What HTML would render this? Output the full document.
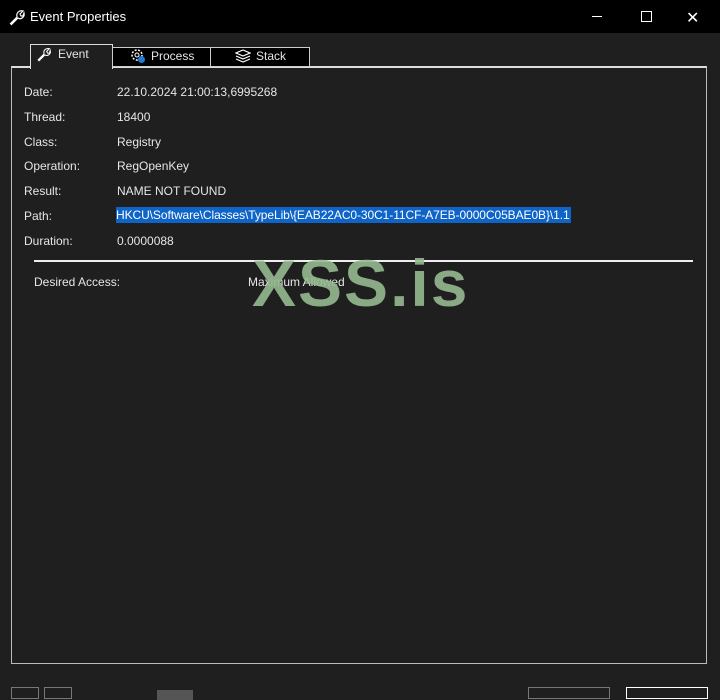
<!DOCTYPE html><html><head><style>
body{margin:0;width:720px;height:693px;background:#1f1f1f;font-family:"Liberation Sans",sans-serif;color:#e6e6e6;overflow:hidden;position:relative}
.a{position:absolute}
.t{font-size:12px}
</style></head><body>
<div class="a" style="left:0;top:0;width:720px;height:33px;background:#000"></div>
<svg class="a" style="left:8px;top:8px" width="18" height="18" viewBox="0 0 18 18"><path d="M2 16 L9 9 M9 9 C8 5 11 2 15 3 L12 6 L13 8 L15 8 L16 5 C17 9 13 12 10 10 L3 17 Z" fill="none" stroke="#fff" stroke-width="1.2"/></svg>
<div class="a t" style="left:30px;top:9px;font-size:13px;color:#fff">Event Properties</div>
<div class="a" style="left:592px;top:16px;width:10px;height:1px;background:#fff"></div>
<div class="a" style="left:641px;top:11px;width:9px;height:9px;border:1px solid #fff"></div>
<div class="a" style="left:686px;top:8px;color:#fff;font-size:16px">✕</div>
<div class="a" style="left:11px;top:66px;width:694px;height:595px;border:1px solid #bbb;border-top:2px solid #ddd"></div>
<div class="a" style="left:30px;top:44px;width:81px;height:24px;border:1px solid #ddd;border-bottom:none;background:#1f1f1f"></div>
<div class="a" style="left:112px;top:47px;width:97px;height:18px;border:1px solid #ccc;background:#000"></div>
<div class="a" style="left:210px;top:47px;width:98px;height:18px;border:1px solid #ccc;background:#000"></div>
<svg class="a" style="left:36px;top:46px" width="16" height="16" viewBox="0 0 18 18"><path d="M2 16 L9 9 M9 9 C8 5 11 2 15 3 L12 6 L13 8 L15 8 L16 5 C17 9 13 12 10 10 L3 17 Z" fill="none" stroke="#fff" stroke-width="1.2"/></svg>
<div class="a t" style="left:58px;top:47px">Event</div>
<svg class="a" style="left:130px;top:48px" width="16" height="16" viewBox="0 0 16 16"><circle cx="7" cy="7" r="5" fill="none" stroke="#fff" stroke-width="1.5" stroke-dasharray="2 1.5"/><circle cx="7" cy="7" r="2" fill="none" stroke="#fff"/><circle cx="11.5" cy="11.5" r="3.5" fill="#1e7bd6"/></svg>
<div class="a t" style="left:151px;top:49px">Process</div>
<svg class="a" style="left:235px;top:49px" width="16" height="14" viewBox="0 0 16 14"><path d="M8 1 L15 4 L8 7 L1 4 Z M1 7 L8 10 L15 7 M1 10 L8 13 L15 10" fill="none" stroke="#fff" stroke-width="1.2"/></svg>
<div class="a t" style="left:256px;top:49px">Stack</div>
<div class="a t" style="left:24px;top:85px">Date:</div><div class="a t" style="left:117px;top:85px">22.10.2024 21:00:13,6995268</div>
<div class="a t" style="left:24px;top:110px">Thread:</div><div class="a t" style="left:117px;top:110px">18400</div>
<div class="a t" style="left:24px;top:135px">Class:</div><div class="a t" style="left:117px;top:135px">Registry</div>
<div class="a t" style="left:24px;top:159px">Operation:</div><div class="a t" style="left:117px;top:159px">RegOpenKey</div>
<div class="a t" style="left:24px;top:184px">Result:</div><div class="a t" style="left:117px;top:184px">NAME NOT FOUND</div>
<div class="a t" style="left:24px;top:209px">Path:</div>
<div class="a t" style="left:116px;top:207px;width:455px;height:16px;line-height:16px;background:#0f64c8;color:#fff;letter-spacing:-0.08px;white-space:nowrap;overflow:hidden">HKCU\Software\Classes\TypeLib\{EAB22AC0-30C1-11CF-A7EB-0000C05BAE0B}\1.1</div>
<div class="a t" style="left:24px;top:234px">Duration:</div><div class="a t" style="left:117px;top:234px">0.0000088</div>
<div class="a" style="left:34px;top:260px;width:659px;height:2px;background:#eee"></div>
<div class="a t" style="left:34px;top:275px">Desired Access:</div><div class="a t" style="left:248px;top:275px">Maximum Allowed</div>
<div class="a" style="left:252px;top:245px;font-size:66px;font-weight:bold;letter-spacing:2px;color:rgba(150,185,145,0.9)">XSS.is</div>
<div class="a" style="left:11px;top:687px;width:26px;height:10px;border:1px solid #777"></div>
<div class="a" style="left:44px;top:687px;width:26px;height:10px;border:1px solid #777"></div>
<div class="a" style="left:157px;top:690px;width:36px;height:10px;background:#555"></div>
<div class="a" style="left:528px;top:687px;width:80px;height:10px;border:1px solid #777"></div>
<div class="a" style="left:626px;top:687px;width:80px;height:10px;border:1px solid #fff"></div>
</body></html>
